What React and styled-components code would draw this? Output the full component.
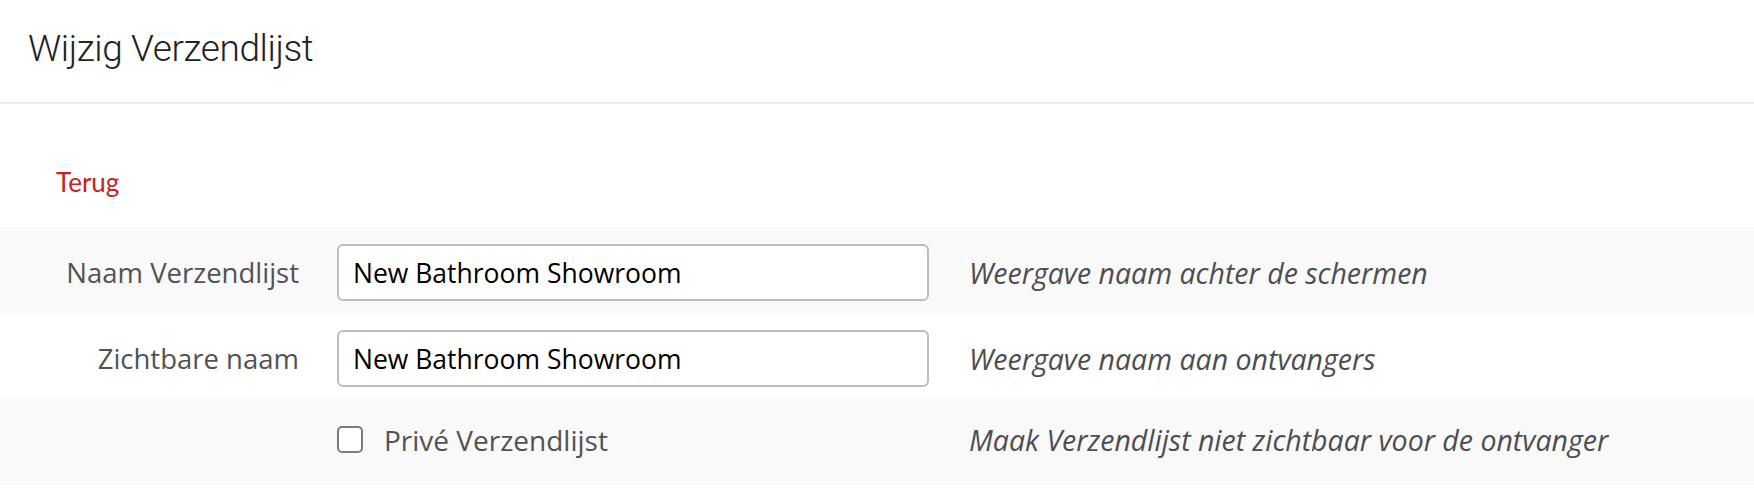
import React from 'react';
import styled, { createGlobalStyle } from 'styled-components';

const GlobalStyle = createGlobalStyle`
  html, body {
    margin: 0;
    padding: 0;
    background: #FFF;
  }
`;

const Page = styled.div`
  width: 100%;
  background: #FFF;
`;

const Header = styled.div`
  height: 104px;
  box-sizing: border-box;
  padding: 26px 0 0 28px;
  border-bottom: 2px solid #ececec;
`;

const Title = styled.h1`
  margin: 0;
  font-family: Roboto, "Liberation Sans", sans-serif;
  font-weight: 300;
  font-size: 37px;
  letter-spacing: -0.4px;
  line-height: 46px;
  color: #222;
`;

const BackLink = styled.a`
  display: block;
  margin: 63px 0 29px 56px;
  font-family: Lato, "Open Sans", sans-serif;
  font-size: 26px;
  line-height: 1.2;
  color: #c4221f;
  text-decoration: none;
  cursor: pointer;
`;

const Row = styled.div`
  display: grid;
  grid-template-columns: 299px 592px 1fr;
  column-gap: 38px;
  align-items: center;
  box-sizing: border-box;
  height: 86px;
  padding: ${({ $raised }) => ($raised ? '12px 0 17px' : '17px 0 12px')};
  background: ${({ $shaded }) => ($shaded ? '#f9f9f9' : '#FFF')};
  font-family: "Open Sans", sans-serif;
  font-size: 27.5px;
  color: #525256;
`;

const Label = styled.label`
  text-align: right;
`;

const Input = styled.input`
  box-sizing: border-box;
  width: 100%;
  height: 57px;
  padding: 0 14px;
  border: 2px solid #bdbdc0;
  border-radius: 6px;
  background: #FFF;
  font-family: "Open Sans", sans-serif;
  font-size: 26.5px;
  color: #000;
  outline: none;
`;

const CheckField = styled.label`
  display: flex;
  align-items: center;
  gap: 21px;
  font-size: 28px;
`;

const Box = styled.span`
  box-sizing: border-box;
  width: 26px;
  height: 27px;
  border: 2px solid #7b7b7e;
  border-radius: 5px;
  background: #FFF;
  flex-shrink: 0;
`;

const Hint = styled.div`
  padding-left: 2px;
  font-style: italic;
  font-size: 28.5px;
  color: #4d4d52;
`;

const fields = [
  { label: 'Naam Verzendlijst', value: 'New Bathroom Showroom', hint: 'Weergave naam achter de schermen' },
  { label: 'Zichtbare naam', value: 'New Bathroom Showroom', hint: 'Weergave naam aan ontvangers' },
];

const App = () => (
  <Page>
    <GlobalStyle />
    <Header>
      <Title>Wijzig Verzendlijst</Title>
    </Header>
    <BackLink>Terug</BackLink>
    {fields.map((field, i) => (
      <Row key={field.label} $shaded={i % 2 === 0}>
        <Label>{field.label}</Label>
        <Input defaultValue={field.value} />
        <Hint>{field.hint}</Hint>
      </Row>
    ))}
    <Row $shaded $raised>
      <span />
      <CheckField>
        <Box />
        Privé Verzendlijst
      </CheckField>
      <Hint>Maak Verzendlijst niet zichtbaar voor de ontvanger</Hint>
    </Row>
    <Row>
      <span />
      <Input defaultValue="" />
      <span />
    </Row>
  </Page>
);

export default App;
